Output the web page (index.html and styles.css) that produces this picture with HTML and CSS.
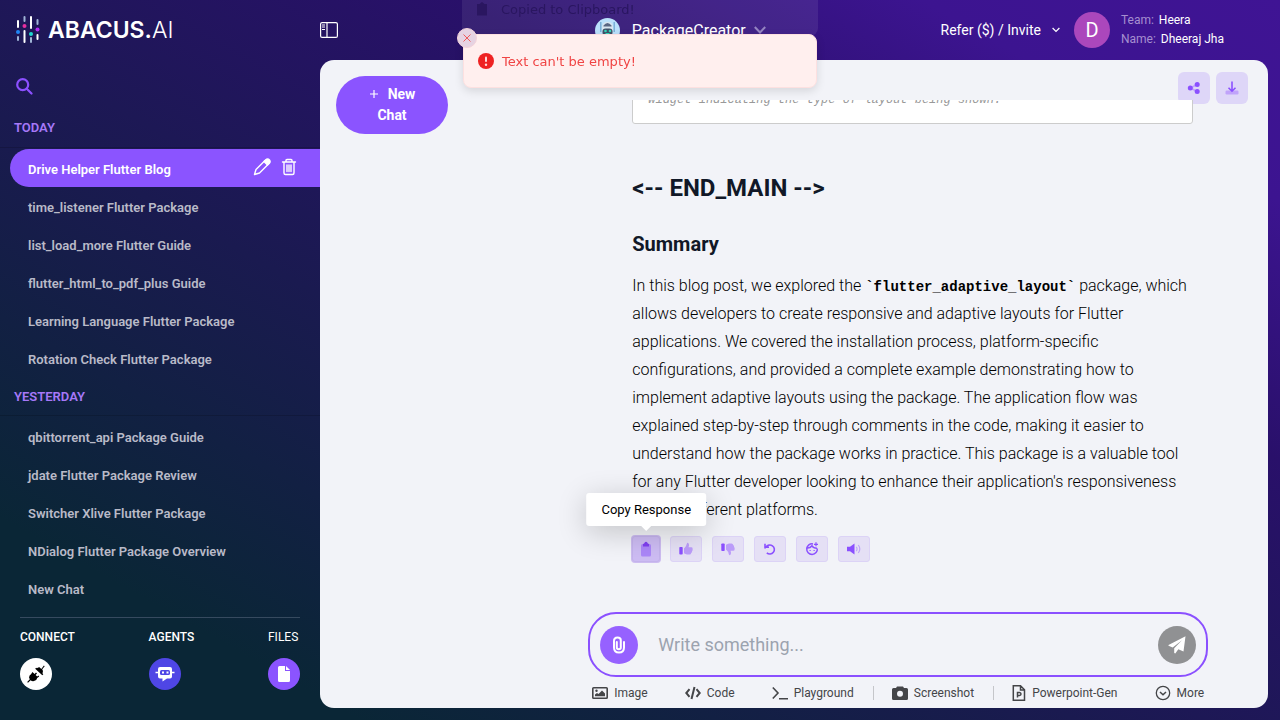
FILE: index.html
```html
<!DOCTYPE html>
<html lang="en">
<head>
<meta charset="utf-8">
<meta name="viewport" content="width=device-width, initial-scale=1">
<title>Abacus.AI Chat</title>
<link rel="stylesheet" href="styles.css">
</head>
<body>
<div class="app">
  <aside class="sidebar">
    <a class="logo" href="#">
      <svg class="logo-mark" width="24" height="30" viewBox="0 0 24 30" fill="none" stroke-width="2" stroke-linecap="round">
        <g stroke="#fff"><path d="M2 6v6M8.500 16v11M15 2v11M21.500 20v4"/></g>
        <g stroke="#9fb4d6"><path d="M2 22v3M8.500 2v4M15 23v4M21.500 5v4"/></g>
        <circle cx="2" cy="17" r="2" fill="#1f86f5"/><circle cx="8.500" cy="11" r="2" fill="#e72fa0"/><circle cx="15" cy="19" r="2" fill="#1fd8cf"/><circle cx="21.500" cy="14.500" r="2" fill="#b32bf3"/>
      </svg>
      <span class="logo-text"><b>ABACUS.</b>AI</span>
    </a>
    <button class="search" aria-label="Search">
      <svg width="17" height="17" viewBox="0 0 17 17" fill="none" stroke="currentColor" stroke-width="2.200" stroke-linecap="round"><circle cx="6.700" cy="6.700" r="5.500"/><path d="M11 11 15.500 15.500"/></svg>
    </button>
    <h2 class="group-title">Today</h2>
    <ul class="chats">
      <li class="chat active"><a href="#">Drive Helper Flutter Blog</a>
        <span class="chat-tools">
          <button aria-label="Rename"><svg width="18" height="18" viewBox="0 0 18 18" fill="none" stroke="currentColor" stroke-width="1.400" stroke-linejoin="round"><path d="M1.500 16.500 3 11.500 12 2.500Q14 1 15.700 2.300T15.500 6L6.500 15z"/><path d="M11 3.500 13.500 1.200Q15.300.700 16.500 2T16.500 5L14.500 7z" fill="currentColor"/></svg></button>
          <button aria-label="Delete"><svg width="16" height="18" viewBox="0 0 16 18" fill="none" stroke="currentColor" stroke-width="1.400" stroke-linecap="round"><path d="M1.500 4h13M5 4V2.500Q5 1.500 6 1.500h4q1 0 1 1V4M3 4v11q0 1.500 1.500 1.500h7q1.500 0 1.500-1.500V4M6 7v6.500M8 7v6.500M10 7v6.500"/></svg></button>
        </span></li>
      <li class="chat"><a href="#">time_listener Flutter Package</a></li>
      <li class="chat"><a href="#">list_load_more Flutter Guide</a></li>
      <li class="chat"><a href="#">flutter_html_to_pdf_plus Guide</a></li>
      <li class="chat"><a href="#">Learning Language Flutter Package</a></li>
      <li class="chat"><a href="#">Rotation Check Flutter Package</a></li>
    </ul>
    <h2 class="group-title later">Yesterday</h2>
    <ul class="chats">
      <li class="chat"><a href="#">qbittorrent_api Package Guide</a></li>
      <li class="chat"><a href="#">jdate Flutter Package Review</a></li>
      <li class="chat"><a href="#">Switcher Xlive Flutter Package</a></li>
      <li class="chat"><a href="#">NDialog Flutter Package Overview</a></li>
      <li class="chat"><a href="#">New Chat</a></li>
    </ul>
    <nav class="side-nav">
      <a href="#" class="side-link connect">CONNECT
        <span class="disc"><svg width="20" height="20" viewBox="0 0 20 20" fill="#000"><path d="M13.500 3.300 15.300 5.100 17.900 1.500 18.700 2.300 16.200 5.300Q18 7.500 16.500 9.600L17.300 10.300 16.300 11.300 9.200 4.700 10.100 3.800 11 4.300Q12.200 3.200 13.500 3.300z"/><path d="M6.400 7.900 8.600 9.900 10 8.400 11 9.400 9.600 10.900 11.200 12.400 12.400 11.500 13.200 12.500 11.200 14Q10.800 16.700 8 17.100 6 17.500 4.600 16.200L2 18.800 1.200 18 3.800 15.300Q2.400 13.500 3.600 11.500L5.200 10z"/></svg></span></a>
      <a href="#" class="side-link agents">AGENTS
        <span class="disc"><svg width="20" height="16" viewBox="0 0 20 16"><path d="M5 1h10q2 0 2 2v7.500q0 2-2 2h-3L7.500 15.500v-3H5q-2 0-2-2V3q0-2 2-2z" fill="#fff"/><path d="M.500 6.500h3M16.500 6.500h3" stroke="#fff" stroke-width="1.500"/><rect x="5" y="4" width="10" height="5" rx="1.500" fill="#4f46e5"/><path d="M7 5.500h2v2H7zM11.500 5.500h2v2h-2z" fill="#fff"/></svg></span></a>
      <a href="#" class="side-link files">FILES
        <span class="disc"><svg width="12" height="16" viewBox="0 0 12 16" fill="#fff"><path d="M1.500 0H7v5h5v9.500q0 1.500-1.500 1.500h-9Q0 16 0 14.500v-13Q0 0 1.500 0z"/><path d="M8 0 12 4H8z"/></svg></span></a>
    </nav>
  </aside>

  <header class="topbar">
    <button class="toggle" aria-label="Toggle sidebar"><svg width="18" height="16" viewBox="0 0 18 16" fill="none" stroke="#fff"><rect x=".6" y=".6" width="16.800" height="14.800" rx="1.500" stroke-width="1.200"/><path d="M7 .500v15" stroke-width="1.200"/><path d="M2 3h3M2 5h3M2 7.500h3"/></svg></button>
    <button class="picker">
      <svg width="25" height="25" viewBox="0 0 25 25"><circle cx="12.500" cy="12.500" r="12.500" fill="#b5defb"/><path d="M5 4h1.500v10H5zM18.500 4H20v10h-1.500z" fill="#6fa9d4"/><rect x="7" y="4" width="11" height="14" rx="5" fill="#d5e3ee"/><path d="M8.500 7.500q4-5 8 0v1h-8z" fill="#4b5a78"/><rect x="7.500" y="10.500" width="10" height="7" rx="3" fill="#31425c"/><circle cx="10.500" cy="13" r="1.300" fill="#24d3b2"/><circle cx="15" cy="13" r="1.300" fill="#24d3b2"/><path d="M10.500 15.500h4" stroke="#24d3b2"/><path d="M8 19h9l3 3q-7 5-15 0z" fill="#779db8"/></svg>
      PackageCreator
      <svg class="dim" width="12" height="8" viewBox="0 0 12 8" fill="none" stroke="currentColor" stroke-width="2"><path d="M.800 1 6 6.500 11.200 1"/></svg>
    </button>
    <button class="refer">Refer ($) / Invite
      <svg width="8" height="6" viewBox="0 0 8 6" fill="none" stroke="currentColor" stroke-width="1.200"><path d="M.600 1 4 4.500 7.400 1"/></svg></button>
    <div class="user">
      <span class="avatar">D</span>
      <div class="user-info">
        <div><span class="key">Team:</span> Heera</div>
        <div><span class="key">Name:</span> Dheeraj Jha</div>
      </div>
    </div>
  </header>

  <main class="panel">
    <div class="panel-left"><button class="new-chat"><svg width="10" height="10" viewBox="0 0 10 10" stroke="#fff" stroke-width="1.200"><path d="M5 1v8M1 5h8"/></svg>New Chat</button></div>
    <section class="conversation">
      <div class="share-bar">
        <button aria-label="Share"><svg width="14" height="14" viewBox="0 0 14 14" fill="#8b50ff"><path d="M3.500 7 10 3.500M3.500 7 10 10.500" stroke="#c0a3fa" stroke-width="1.800"/><circle cx="3.300" cy="7" r="2.500"/><circle cx="10.200" cy="3.500" r="2.500"/><circle cx="10.200" cy="10.500" r="2.500"/></svg></button>
        <button aria-label="Download"><svg width="14" height="14" viewBox="0 0 14 14"><rect x=".500" y="9.500" width="13" height="4" rx="1.200" fill="#c0a3fa"/><path d="M7 .500V10M3.500 6.800 7 10.200 10.500 6.800" fill="none" stroke="#8b50ff" stroke-width="1.600"/></svg></button>
      </div>
      <div class="scroll">
        <article class="message">
          <pre class="code">widget indicating the type of layout being shown.</pre>
          <h1>&lt;-- END_MAIN --&gt;</h1>
          <h3>Summary</h3>
          <p>In this blog post, we explored the <code>`flutter_adaptive_layout`</code> package, which allows developers to create responsive and adaptive layouts for Flutter applications. We covered the installation process, platform-specific configurations, and provided a complete example demonstrating how to implement adaptive layouts using the package. The application flow was explained step-by-step through comments in the code, making it easier to understand how the package works in practice. This package is a valuable tool for any Flutter developer looking to enhance their application's responsiveness across different platforms.</p>
          <div class="actions">
            <div class="copy-wrap">
              <button class="hot" aria-label="Copy"><svg width="12" height="16" viewBox="0 0 12 16"><rect x="1" y="3" width="10" height="12.500" rx="1.500" fill="#ab86f8"/><path d="M3 5.500V3Q4.500 2.800 4.500 1.800 6-.400 7.500 1.800 7.500 2.800 9 3v2.500z" fill="#8040f0"/></svg></button>
              <span class="tip" role="tooltip">Copy Response</span>
            </div>
            <button aria-label="Like"><svg width="14" height="14" viewBox="0 0 14 14"><rect x=".300" y="5" width="3.400" height="7.500" rx=".800" fill="#8b50ff"/><path d="M5 6.500Q7.500 4.500 7.800 1.800 8.300.300 9.500 1.200 10.600 2.500 9.600 5.200H12.500Q14 5.400 13.600 7 14 8.300 13.100 9.100 13.200 10.500 12.200 11 12 12.500 10.500 12.500H8Q6.500 12.300 5 11.200z" fill="#bb9cf9"/></svg></button>
            <button aria-label="Dislike"><svg width="14" height="14" viewBox="0 0 14 14"><rect x=".300" y="1.500" width="3.400" height="7.500" rx=".800" fill="#8b50ff"/><path d="M5 7.500Q7.500 9.500 7.800 12.200 8.300 13.700 9.500 12.800 10.600 11.500 9.600 8.800H12.500Q14 8.600 13.600 7 14 5.700 13.100 4.900 13.200 3.500 12.200 3 12 1.500 10.500 1.500H8Q6.500 1.700 5 2.800z" fill="#bb9cf9"/></svg></button>
            <button aria-label="Regenerate"><svg width="12" height="12" viewBox="0 0 12 12" fill="none" stroke="#8b50ff" stroke-width="1.600"><path d="M2 4.600H1V.800M1.500 4.300H5M2 4.200A4.500 4.500 0 1 1 2.800 9.800"/></svg></button>
            <button aria-label="Persona"><svg width="14" height="14" viewBox="0 0 14 14" fill="none" stroke="#8b50ff" stroke-width="1.500"><path d="M8 1.900A5.300 5.300 0 1 0 12.300 6.500"/><path d="M1.500 6Q5 6.500 7 3.800 8.500 6.300 12 6.200"/><path d="M11 .300v4M9 2.300h4" stroke-width="1.200"/><path d="M4.500 8.500h1.200M8.500 8.500h1.200" stroke-width="1.200"/></svg></button>
            <button aria-label="Read aloud"><svg width="14" height="12" viewBox="0 0 14 12"><path d="M0 3.800h3L7.500.500v11L3 8.200H0z" fill="#8b50ff"/><path d="M9.300 3.800q1.500 2.200 0 4.400M11.300 2q3 4 0 8" fill="none" stroke="#c0a3fa" stroke-width="1.200"/></svg></button>
          </div>
        </article>
      </div>
      <form class="composer">
        <button type="button" class="attach" aria-label="Attach file"><svg width="14" height="18" viewBox="0 0 14 18" fill="none" stroke="#fff" stroke-width="2" stroke-linecap="round"><path d="M4.800 6v5.500q0 1.800 2 1.800t2-1.800V4.200Q8.800 1.500 5.500 1.500 2 1.500 2 5v6.500q0 5 5 5t5-5V6"/></svg></button>
        <input type="text" placeholder="Write something..." aria-label="Message">
        <button type="button" class="send" aria-label="Send"><svg width="18" height="18" viewBox="0 0 18 18" fill="#fff"><path d="M17.500.300 15.500 15.500 10.300 13.300 7.300 17.600 6.200 17V12.200L14 4.300 4.700 11.600.500 9.800V8.900z"/></svg></button>
      </form>
      <div class="tools">
        <button><svg width="16" height="12" viewBox="0 0 16 12"><rect x=".800" y=".800" width="14.400" height="10.400" rx=".800" fill="none" stroke="currentColor" stroke-width="1.600"/><path d="M3 9.200V7.500L5 6l1.500 1L10 3.500 13 6.500v2.700z" fill="currentColor"/><circle cx="4.500" cy="3.800" r="1.200" fill="currentColor"/></svg>Image</button>
        <button><svg width="16" height="14" viewBox="0 0 16 14" fill="none" stroke="currentColor" stroke-width="2"><path d="M4.500 3.200 1.300 7 4.500 10.800M11.500 3.200 14.700 7 11.500 10.800M9.500 1 6.500 13"/></svg>Code</button>
        <button><svg width="16" height="14" viewBox="0 0 16 14" fill="none" stroke="currentColor" stroke-width="1.600"><path d="M.800 1.500 6 7 .800 12.500M7 12.800h9"/></svg>Playground</button>
        <button class="split"><svg width="16" height="14" viewBox="0 0 16 14"><path d="M1.500 2H4l1-1.500h6L12 2h2.500Q16 2 16 3.500v9q0 1.500-1.500 1.500h-13Q0 14 0 12.500v-9Q0 2 1.500 2z" fill="currentColor"/><circle cx="8" cy="7.800" r="3" fill="#f2f3f8"/></svg>Screenshot</button>
        <button class="split"><svg width="14" height="16" viewBox="0 0 14 16" fill="none" stroke="currentColor" stroke-width="1.500"><path d="M2.500.800H8.500L12.500 4.800V15.200H1.300V.800zM8.500.800V5h4M5.500 12.500V7.500H7.500Q9 7.600 9 9T7.500 10.400H5.500"/></svg>Powerpoint-Gen</button>
        <button><svg width="16" height="16" viewBox="0 0 16 16" fill="none" stroke="currentColor" stroke-width="1.300"><circle cx="8" cy="8" r="6.700"/><path d="M5 7 8 9.800 11 7" stroke-width="1.500"/></svg>More</button>
      </div>
    </section>
  </main>
</div>

<div class="toast old" role="status"><svg width="12" height="14" viewBox="0 0 12 14"><path d="M1 2h2.500L6 0 8.500 2H11v11.500H1z" fill="currentColor"/></svg>Copied to Clipboard!</div>
<div class="toast error" role="alert">
  <button class="toast-close" aria-label="Close"><svg width="8" height="8" viewBox="0 0 8 8" stroke="#ef5a5a"><path d="M.500.500 7.500 7.500M7.500.500.500 7.500"/></svg></button>
  <svg width="16" height="16" viewBox="0 0 16 16"><circle cx="8" cy="8" r="8" fill="#ee2222"/><rect x="7" y="3.500" width="2" height="5.500" rx="1" fill="#ffdada"/><circle cx="8" cy="11.700" r="1.200" fill="#ffdada"/></svg>Text can't be empty!
</div>
</body>
</html>
```
FILE: styles.css
```css
* { box-sizing: border-box; }
body {
  margin: 0;
  font-family: Roboto, "Liberation Sans", sans-serif;
  color: #fff;
}
button {
  font: inherit;
  color: inherit;
  background: none;
  border: 0;
  padding: 0;
  cursor: pointer;
}
a { color: inherit; text-decoration: none; }
svg { flex: none; }

.app {
  display: grid;
  grid-template-columns: 320px 1fr;
  grid-template-rows: 60px 1fr;
  height: 100vh;
  background: linear-gradient(to top right, #0a2636 0%, #0a2636 14%, #1a1a50 42%, #29106a 68%, #3c1490 86%, #3f1494 100%);
}

.sidebar {
  grid-row: 1 / 3;
  display: flex;
  flex-direction: column;
}
.logo {
  display: flex;
  align-items: center;
  gap: 8px;
  height: 60px;
  padding-left: 16px;
}
.logo-text { font: 300 23px/28px Inter, sans-serif; }
.logo-text b { font-weight: 600; }
.search {
  display: flex;
  align-items: center;
  height: 48px;
  padding: 4px 16px 0;
  color: #8b50ff;
}
.group-title {
  margin: 0;
  padding: 0 14px;
  height: 40px;
  border-bottom: 1px solid rgba(0, 0, 0, 0.15);
  font-size: 13px;
  font-weight: 600;
  line-height: 40px;
  text-transform: uppercase;
  color: #a678f8;
}
.later { height: 39px; }
.chats { margin: 0; padding: 1px 0 0; list-style: none; }
.chat {
  display: flex;
  align-items: center;
  justify-content: space-between;
  height: 38px;
  margin-left: 10px;
  padding: 2px 23px 0 18px;
  font-size: 13px;
  font-weight: 600;
  color: #b9bac8;
}
.active {
  border-radius: 19px 0 0 19px;
  background: #8b54ff;
  color: #fff;
}
.chat-tools { display: flex; gap: 10px; padding-bottom: 4px; }
.chat-tools button { display: flex; }
.side-nav {
  display: flex;
  justify-content: space-between;
  margin: 10px 20px 0;
  padding-top: 9px;
  border-top: 1px solid #364a5f;
}
.side-link {
  display: flex;
  flex-direction: column;
  gap: 11px;
  font-size: 12px;
  font-weight: 500;
  line-height: 20px;
}
.files { font-weight: 400; }
.disc {
  display: flex;
  align-items: center;
  justify-content: center;
  width: 32px;
  height: 32px;
  border-radius: 50%;
}
.connect .disc { background: #fff; }
.agents .disc { background: #4f46e5; }
.files .disc { background: #8b54ff; }

.topbar {
  display: flex;
  align-items: center;
  padding-right: 56px;
}
.toggle { display: flex; margin-right: 82px; }
.picker {
  flex: 1;
  display: flex;
  align-items: center;
  justify-content: center;
  gap: 12px;
  font-size: 16px;
}
.picker .dim { margin-left: -4px; color: #8d7bbd; }
.refer {
  display: flex;
  align-items: center;
  gap: 11px;
  margin-right: 14px;
  font-size: 14px;
}
.user { display: flex; align-items: center; gap: 11px; }
.avatar {
  width: 36px;
  height: 36px;
  border-radius: 50%;
  background: #ab47bc;
  font-size: 20px;
  line-height: 36px;
  text-align: center;
}
.user-info { font-size: 12px; line-height: 19px; }
.key { margin-right: 2px; color: #a68fd0; }

.panel {
  display: grid;
  grid-template-columns: 22% 78%;
  min-height: 0;
  margin: 0 12px 12px 0;
  border-radius: 14px;
  background: #f2f3f8;
  overflow: hidden;
}
.panel-left { padding: 16px; }
.new-chat {
  width: 112px;
  padding: 8px 28px;
  border-radius: 29px;
  background: #8b54ff;
  font-size: 14px;
  font-weight: 700;
  line-height: 21px;
}
.new-chat svg { margin-right: 9px; }

.conversation {
  display: flex;
  flex-direction: column;
  align-items: center;
  min-height: 0;
}
.share-bar {
  align-self: flex-end;
  display: flex;
  gap: 6px;
  height: 40px;
  padding: 12px 20px 0 0;
}
.share-bar button {
  display: flex;
  align-items: center;
  justify-content: center;
  width: 32px;
  height: 32px;
  border-radius: 6px;
  background: #ded6f8;
}
.scroll {
  position: relative;
  flex: 1;
  display: flex;
  flex-direction: column;
  justify-content: flex-end;
  align-items: center;
  width: 100%;
  min-height: 0;
  padding-bottom: 50px;
  overflow: hidden;
}
.message {
  width: 100%;
  max-width: 620px;
  padding: 0 15px 0 44px;
  color: #000;
}
.code {
  margin: 0;
  padding: 16px 15px 14px;
  border: 1px solid #ccc;
  border-radius: 3px;
  background: #fff;
  font: italic 12px/18px "Liberation Mono", monospace;
  color: #999;
}
.message h1 {
  margin: 48px 0 24px;
  font-size: 24px;
  font-weight: 700;
  line-height: 32px;
  color: #111827;
}
.message h3 {
  margin: 0 0 12px;
  font-size: 20px;
  font-weight: 700;
  line-height: 32px;
  color: #111827;
}
.message p {
  margin: 0;
  font-size: 16px;
  font-weight: 300;
  line-height: 28px;
}
.message code { font: bold 14px/20px "Liberation Mono", monospace; }
.actions {
  display: flex;
  align-items: center;
  gap: 10px;
  padding-top: 12px;
}
.actions button {
  display: flex;
  align-items: center;
  justify-content: center;
  width: 32px;
  height: 26px;
  border: 1px solid #dcd3f6;
  border-radius: 3px;
  background: #e5e0f5;
}
.copy-wrap { position: relative; height: 26px; }
.actions .hot {
  width: 28px;
  border-color: #c3b2ec;
  background: #cdbcf3;
  box-shadow: 0 0 0 1px #cdbcf0;
}
.tip {
  position: absolute;
  left: 50%;
  bottom: 36px;
  transform: translateX(-50%);
  padding: 7px 15px;
  border-radius: 3px;
  background: #fff;
  box-shadow: 0 6px 30px rgba(0, 0, 0, 0.2);
  font-size: 13px;
  line-height: 19px;
  white-space: nowrap;
}
.tip::after {
  content: "";
  position: absolute;
  left: 50%;
  top: 100%;
  margin-left: -5px;
  border: 5px solid transparent;
  border-top-color: #fff;
  border-bottom: 0;
}

.composer {
  display: flex;
  align-items: center;
  width: 100%;
  max-width: 620px;
  padding: 12px 10px 11px;
  border: 2px solid #8b50ff;
  border-radius: 28px;
}
.attach, .send {
  display: flex;
  align-items: center;
  justify-content: center;
  width: 38px;
  height: 38px;
  border-radius: 50%;
  background: #9661ff;
}
.send { background: #909193; }
.composer input {
  flex: 1;
  min-width: 0;
  height: 38px;
  padding: 0 20px 2px;
  border: 0;
  outline: 0;
  background: none;
  font: 18px Roboto, sans-serif;
  color: #111827;
}
.composer input::placeholder { color: #9ca3af; }
.tools {
  display: flex;
  justify-content: space-between;
  width: 100%;
  max-width: 648px;
  padding: 9px 0 8px;
  color: #444548;
  font-size: 12px;
  line-height: 14px;
}
.tools button {
  display: flex;
  align-items: center;
  gap: 6px;
  height: 14px;
  padding: 0 18px;
}
.tools .split { border-left: 1px solid #c5c6ca; }

.toast {
  position: fixed;
  left: 50%;
  transform: translateX(-50%);
  display: flex;
  align-items: center;
  gap: 8px;
  width: 354px;
  height: 54px;
  padding: 0 14px;
  border-radius: 8px;
  font: 13px "DejaVu Sans", sans-serif;
}
.old {
  top: -18px;
  width: 356px;
  gap: 13px;
  background: rgba(255, 255, 255, 0.08);
  color: #2a1660;
}
.error {
  top: 34px;
  border: 1px solid #fde0e0;
  background: #ffefee;
  box-shadow: 0 3px 10px rgba(0, 0, 0, 0.12);
  color: #f04444;
}
.toast-close {
  position: absolute;
  left: -7px;
  top: -7px;
  display: flex;
  align-items: center;
  justify-content: center;
  width: 20px;
  height: 20px;
  border: 1px solid #f3d3da;
  border-radius: 50%;
  background: #e6d3e2;
}
```
